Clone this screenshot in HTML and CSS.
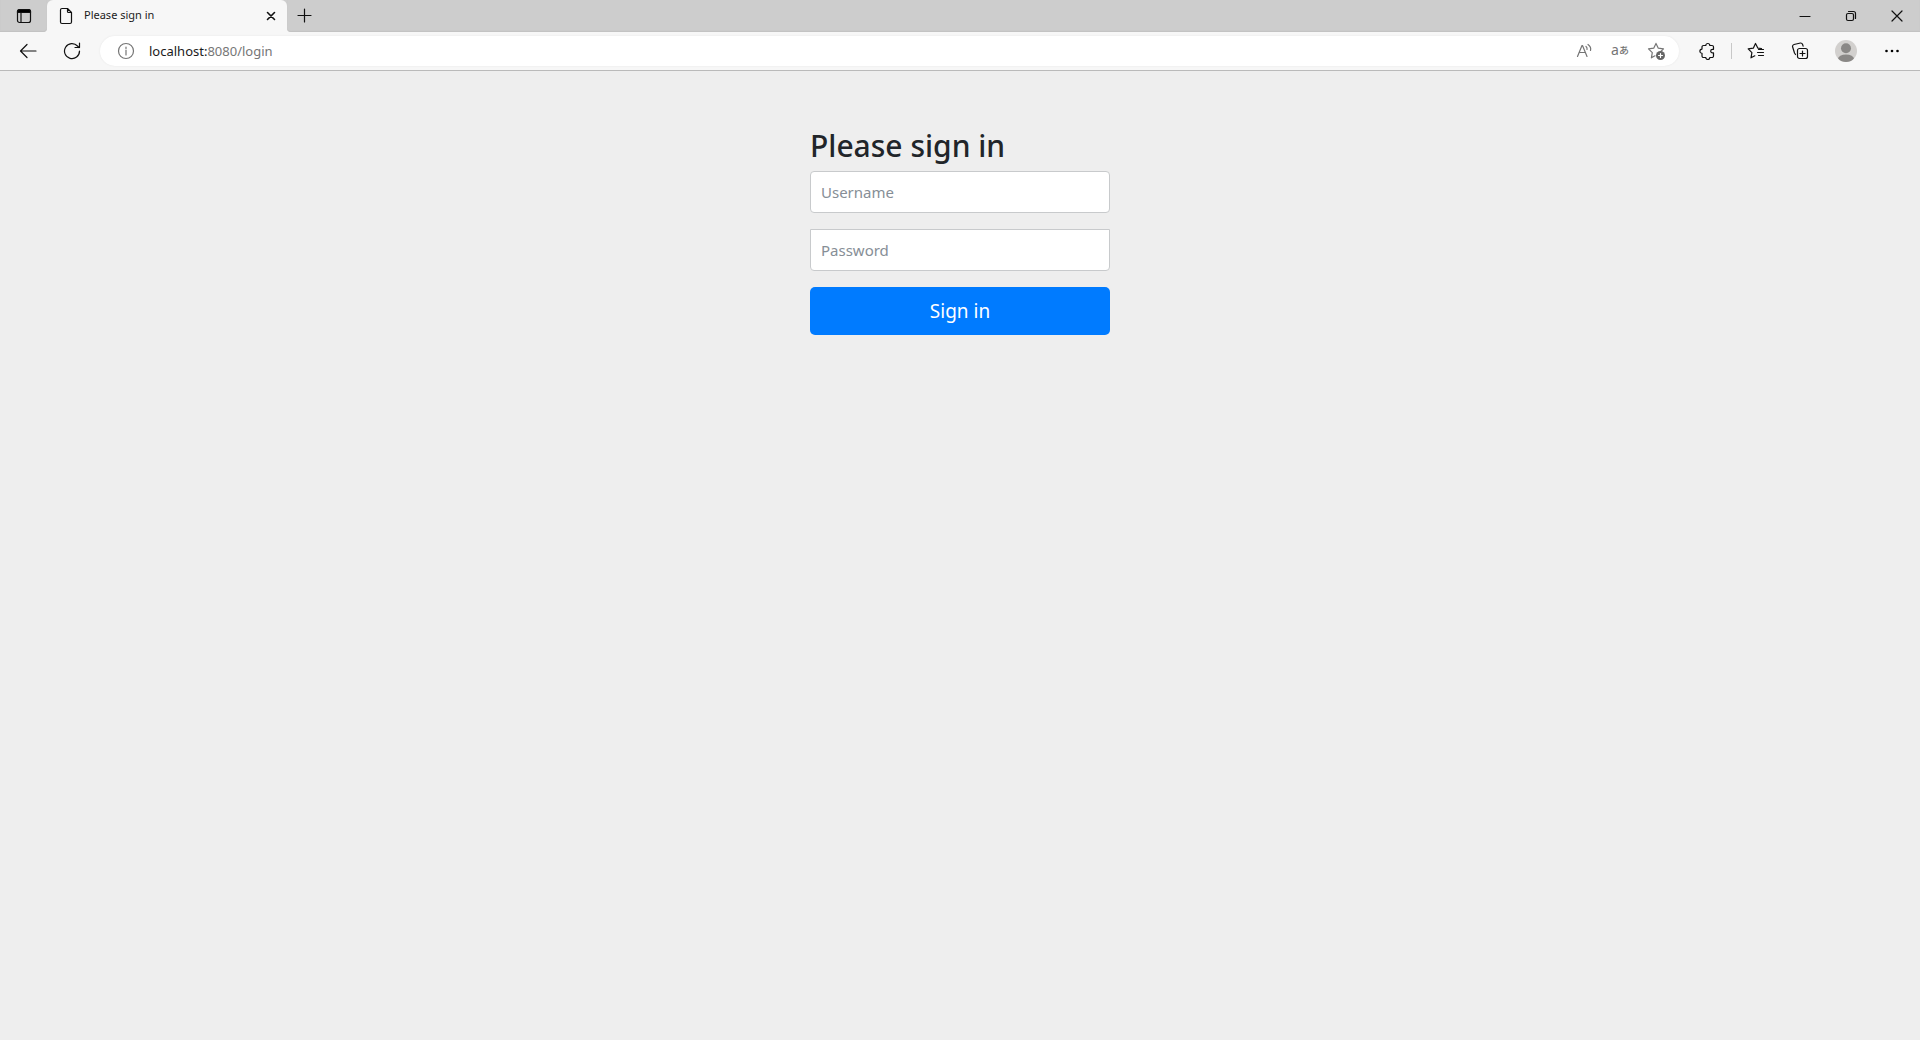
FILE: index.html
```html
<!DOCTYPE html>
<html lang="en">
<head>
<meta charset="utf-8">
<meta name="viewport" content="width=device-width, initial-scale=1">
<title>Please sign in</title>
<link rel="stylesheet" href="styles.css">
</head>
<body>
<header class="browser">
  <div class="tab-strip">
    <div class="strip-start">
      <button class="icon-button" type="button" aria-label="Tab actions">
        <svg width="16" height="16" viewBox="0 0 16 16"><rect x="1.5" y="1.5" width="13" height="13" rx="2"/><path class="solid" d="M1.5 4.500V3.5a2 2 0 0 1 2-2h9a2 2 0 0 1 2 2v1z"/><path d="M5 5v9"/></svg>
      </button>
    </div>
    <div class="tab">
      <svg width="16" height="18" viewBox="0 0 16 18"><path d="M4 1.500h5.500l4 4V15a1.500 1.500 0 0 1-1.500 1.500H4A1.500 1.500 0 0 1 2.500 15V3A1.500 1.500 0 0 1 4 1.500zM9.500 1.500V4.500a1 1 0 0 0 1 1h3"/></svg>
      <span class="tab-title">Please sign in</span>
      <button class="tab-close" type="button" aria-label="Close tab">
        <svg class="bold" width="10" height="10" viewBox="0 0 10 10"><path d="M1.500 1.500l7 7M8.500 1.500l-7 7"/></svg>
      </button>
    </div>
    <div class="strip-end">
      <button class="new-tab" type="button" aria-label="New tab">
        <svg width="16" height="16" viewBox="0 0 16 16"><path d="M1 7.500h13M7.500 1v13"/></svg>
      </button>
      <div class="window-controls">
        <button type="button" aria-label="Minimize"><svg width="12" height="12" viewBox="0 0 12 12"><path d="M1 6.500h10"/></svg></button>
        <button type="button" aria-label="Restore"><svg width="12" height="12" viewBox="0 0 12 12"><rect x="1.500" y="3.500" width="7" height="7" rx="1.500"/><path d="M3.500 1.500H8.500a2 2 0 0 1 2 2V8.500"/></svg></button>
        <button type="button" aria-label="Close"><svg width="12" height="12" viewBox="0 0 12 12"><path d="M1 1l10 10M11 1L1 11"/></svg></button>
      </div>
    </div>
  </div>
  <div class="toolbar">
    <div class="nav-buttons">
      <button type="button" aria-label="Back"><svg width="18" height="16" viewBox="0 0 18 16"><path d="M17 8H1.500M8 1.500L1.500 8 8 14.500"/></svg></button>
      <button type="button" aria-label="Refresh"><svg width="18" height="18" viewBox="0 0 18 18"><path d="M16.500 9A7.500 7.500 0 1 1 14.500 4L16 5.500M16.500 1v4.500H12"/></svg></button>
    </div>
    <div class="address-bar">
      <svg class="muted" width="20" height="20" viewBox="0 0 20 20"><circle cx="10" cy="10" r="7.500"/><path d="M10 9v5M10 6v1.500"/></svg>
      <span class="url"><span class="host">localhost:</span>8080/login</span>
      <button type="button" aria-label="Read aloud"><svg class="muted" width="18" height="18" viewBox="0 0 18 18"><path d="M2.500 14.500L7 3.500h.5L12 14.500M4 10.500h6.500M11 4.500q1.500 1.300 1 3M13 2.500q3.500 2.500 2.500 6"/></svg></button>
      <button class="translate" type="button" aria-label="Translate">a<span class="kana">あ</span></button>
      <button type="button" aria-label="Add to favorites"><svg class="muted" width="20" height="18" viewBox="0 0 20 18"><path d="M10 1.500l2.300 4.700 5.200.7-2.700 2.600M10 1.500L7.700 6.200l-5.200.7 3.800 3.700-.9 5.200 3.600-2"/><circle class="badge" cx="14.500" cy="13.500" r="4.500"/><path class="plus" d="M12.500 13.500h4M14.500 11.500v4"/></svg></button>
    </div>
    <div class="tools">
      <button type="button" aria-label="Extensions"><svg width="18" height="18" viewBox="0 0 18 18"><path d="M5.500 3.500h2.300a2 2 0 0 1 4 0h2.200a1.500 1.500 0 0 1 1.500 1.500v2.300h-1a1.800 1.800 0 0 0 0 3.600h1v3.100a1.500 1.500 0 0 1-1.500 1.500h-2.200a2 2 0 0 1-4 0H5.500A1.500 1.500 0 0 1 4 14v-2.700a2.100 2.100 0 0 1 0-4.200V5a1.500 1.500 0 0 1 1.500-1.500z"/></svg></button>
      <span class="separator"></span>
      <button type="button" aria-label="Favorites"><svg width="18" height="18" viewBox="0 0 18 18"><path d="M14.500 6.500l-3.700-.4L8.500 1.500 6.300 6.200l-5.100.7 3.700 3.700-.9 5.200 3.800-2M11.500 7.500h5M10.500 10.500h6M11.500 13.500h5"/></svg></button>
      <button type="button" aria-label="Collections"><svg width="18" height="18" viewBox="0 0 18 18"><rect x="6.500" y="6.500" width="10" height="10" rx="2"/><path d="M11.500 9v5M9 11.500h5M4.500 12.500L3.500 11 1.500 4.500a2 2 0 0 1 1.500-2L9.500 1a2 2 0 0 1 2 1.200l.6 2"/></svg></button>
      <button class="profile" type="button" aria-label="Profile"><svg width="22" height="22" viewBox="0 0 22 22"><clipPath id="avatar"><circle cx="11" cy="11" r="11"/></clipPath><g clip-path="url(#avatar)"><path class="avatar-back" d="M0 0h22v22H0z"/><circle class="avatar-person" cx="11" cy="8.300" r="5"/><ellipse class="avatar-person" cx="11" cy="19" rx="8" ry="4.500"/></g></svg></button>
      <button type="button" aria-label="Settings and more"><svg width="16" height="16" viewBox="0 0 16 16"><circle class="dot" cx="2.500" cy="8" r="1.300"/><circle class="dot" cx="8" cy="8" r="1.300"/><circle class="dot" cx="13.500" cy="8" r="1.300"/></svg></button>
    </div>
  </div>
</header>
<main class="page">
  <form class="signin">
    <h2>Please sign in</h2>
    <input class="username" type="text" placeholder="Username" aria-label="Username">
    <input class="password" type="password" placeholder="Password" aria-label="Password">
    <button class="submit" type="submit">Sign in</button>
  </form>
</main>
</body>
</html>
```
FILE: styles.css
```css
* { box-sizing: border-box; }

body {
  margin: 0;
  min-height: 100vh;
  background: #eee;
  font-family: "Noto Sans", "Noto Sans CJK JP", sans-serif;
  color: #212529;
}

button {
  display: flex;
  align-items: center;
  justify-content: center;
  margin: 0;
  padding: 0;
  border: 0;
  background: transparent;
  color: inherit;
  font: inherit;
}

svg {
  display: block;
  flex: none;
  fill: none;
  stroke: #111;
  stroke-width: 1.2;
  stroke-linecap: round;
  stroke-linejoin: round;
}

svg .solid, svg .dot { fill: #000; }
svg .dot { stroke: none; }
svg.bold { stroke-width: 1.6; }
svg.muted { stroke: #757575; }
svg .badge { fill: #666; stroke: none; }
svg .plus { stroke: #fff; }
svg .avatar-back { fill: #d2d0ce; stroke: none; }
svg .avatar-person { fill: #8a8886; stroke: none; }

.browser {
  background: #f7f7f7;
  border-bottom: 1px solid #bababa;
}

.tab-strip {
  display: flex;
  height: 32px;
  background: linear-gradient(#cdcdcd 50%, #f7f7f7 50%);
}

.strip-start, .strip-end {
  display: flex;
  background: #cdcdcd;
  box-shadow: inset 0 -1px 1px #c2c2c2;
}

.strip-start { width: 47px; border-bottom-right-radius: 4px; }
.strip-end { flex: 1; justify-content: space-between; border-bottom-left-radius: 4px; }
.icon-button { width: 48px; }

.tab {
  display: flex;
  align-items: center;
  width: 240px;
  padding: 0 8px 0 11px;
  background: #f7f7f7;
  border-radius: 6px 6px 0 0;
}

.tab-title {
  flex: 1;
  margin-left: 10px;
  font-size: 11px;
  line-height: 14px;
  padding-bottom: 2px;
  color: #1b1b1b;
}

.tab-close { width: 16px; height: 16px; }
.new-tab { width: 35px; }
.window-controls { display: flex; }
.window-controls button { width: 46px; }

.toolbar {
  display: flex;
  align-items: center;
  gap: 6px;
  height: 38px;
  padding: 0 6px;
}

.nav-buttons, .tools { display: flex; align-items: center; }
.nav-buttons button, .tools button { width: 44px; height: 30px; }
.tools .profile { width: 48px; }
.separator { width: 1px; height: 16px; margin: 0 2px; background: #c8c8c8; }

.address-bar {
  display: flex;
  flex: 1;
  align-items: center;
  height: 30px;
  padding: 0 5px 0 16px;
  border-radius: 15px;
  background: #fff;
  box-shadow: 0 0 2px #e4e4e4;
}

.address-bar button { width: 36px; height: 30px; }
.url { flex: 1; margin-left: 13px; font-size: 13px; color: #767676; }
.host { color: #1b1b1b; }
.address-bar .translate { padding-bottom: 3px; font-size: 14px; color: #757575; }
.kana { font-size: 10px; font-weight: 500; }

.page { padding: 40px 15px; }

.signin {
  display: flex;
  flex-direction: column;
  max-width: 330px;
  margin: 0 auto;
  padding: 15px;
}

h2 {
  margin: 0 0 6px;
  font-size: 30px;
  font-weight: 500;
  line-height: 39px;
}

input {
  height: 42px;
  margin: 0 0 16px;
  padding: 0 10px;
  border: 1px solid #c8cacc;
  background: #fff;
  color: #495057;
  font: 15px "Noto Sans", sans-serif;
}

input::placeholder { color: #868e96; opacity: 1; }
.username { border-radius: 4px; }
.password { border-radius: 0 0 4px 4px; }

.submit {
  height: 48px;
  border-radius: 5px;
  background: #007bff;
  color: #fff;
  font-size: 19px;
}
```
